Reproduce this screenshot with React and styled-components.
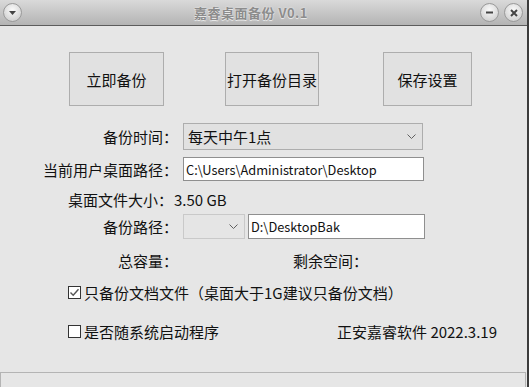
import React from 'react';
import styled, { createGlobalStyle } from 'styled-components';

const GlobalStyle = createGlobalStyle`
  html, body {
    margin: 0;
    padding: 0;
    background: #e6e6e6;
  }
  * { box-sizing: border-box; }
`

const Window = styled.div`
  width: 529px;
  height: 387px;
  display: flex;
  flex-direction: column;
  background: #e6e6e6;
  border-right: 2px solid #3c3c3c;
  font-family: "Noto Sans CJK SC", "Noto Sans", sans-serif;
  font-size: 15px;
  color: #111;
  overflow: hidden;
`

const TitleBar = styled.div`
  height: 26px;
  flex: none;
  display: flex;
  align-items: center;
  padding: 0 4px 0 3px;
  background: linear-gradient(to bottom, #d9d9d9, #b4b4b4);
  border-bottom: 1px solid #5c5c5c;
`

const TitleText = styled.div`
  flex: 1;
  text-align: center;
  font-family: "Noto Sans CJK SC", "DejaVu Sans", sans-serif;
  font-weight: bold;
  font-size: 13px;
  color: #8c8c8c;
  text-shadow: 0 1px 0 #e8e8e8, 0 0 2px #f0f0f0;
  letter-spacing: 0.5px;
`

const RoundButton = styled.div`
  width: 19px;
  height: 19px;
  border-radius: 50%;
  border: 1px solid #9a9a9a;
  background: radial-gradient(circle at 50% 35%, #fafafa, #d4d4d4 75%);
  display: flex;
  align-items: center;
  justify-content: center;
  margin-left: ${p => p.$gap || 0}px;
`

const Body = styled.div`
  flex: 1;
  display: flex;
  flex-direction: column;
`

const Toolbar = styled.div`
  display: flex;
  padding: 26px 0 0 69px;
  margin-bottom: 17px;
`

const ActionButton = styled.button`
  width: ${p => p.$w}px;
  height: 54px;
  margin-right: ${p => p.$gap || 0}px;
  padding: 0;
  background: #e1e1e1;
  border: 1px solid #adadad;
  font-family: inherit;
  font-size: 15px;
  color: #111;
`

const Row = styled.div`
  display: flex;
  align-items: center;
  height: ${p => p.$h}px;
  margin-top: ${p => p.$top || 0}px;
  padding-left: ${p => p.$indent || 0}px;
`

const Label = styled.div`
  width: ${p => p.$w || 178}px;
  flex: none;
  text-align: right;
  white-space: nowrap;
  margin-right: ${p => p.$gap ?? 5}px;
`

const Select = styled.div`
  width: ${p => p.$w}px;
  height: 100%;
  flex: none;
  display: flex;
  align-items: center;
  justify-content: space-between;
  padding: 0 6px 0 4px;
  background: ${p => p.$muted ? '#e5e5e5' : '#e1e1e1'};
  border: 1px solid ${p => p.$muted ? '#c9c9c9' : '#adadad'};
`

const Input = styled.div`
  width: ${p => p.$w}px;
  height: 100%;
  flex: none;
  margin-left: ${p => p.$gap || 0}px;
  display: flex;
  align-items: center;
  padding-left: 2px;
  background: #fff;
  border: 1px solid #8f8f8f;
  font-size: 12.8px;
  white-space: nowrap;
`

const Value = styled.span`
  margin-left: ${p => p.$gap || 0}px;
  white-space: nowrap;
`

const Check = styled.span`
  width: 13px;
  height: 13px;
  flex: none;
  border: 1px solid #333;
  background: #fff;
  display: flex;
  align-items: center;
  justify-content: center;
  margin-right: 3px;
`

const StatusBar = styled.div`
  margin-top: auto;
  height: 15px;
  border: 1px solid #b4b4b4;
  border-bottom: none;
  margin-right: 1px;
`

const Chevron = () => (
  <svg width="9" height="5" viewBox="0 0 9 5">
    <polyline points="0.5,0.5 4.5,4.5 8.5,0.5" fill="none" stroke="#606060" strokeWidth="1" />
  </svg>
)

const CheckBox = ({ checked }) => (
  <Check>
    {checked && (
      <svg width="11" height="11" viewBox="0 0 11 11">
        <polyline points="1.5,5.5 4.2,8.2 9.5,2.2" fill="none" stroke="#555" strokeWidth="1.4" />
      </svg>
    )}
  </Check>
)

export default function App() {
  return (
    <>
      <GlobalStyle />
      <Window>
        <TitleBar>
          <RoundButton>
            <svg width="7" height="4" viewBox="0 0 7 4"><polygon points="0,0 7,0 3.5,4" fill="#444" /></svg>
          </RoundButton>
          <TitleText>嘉睿桌面备份 V0.1</TitleText>
          <RoundButton>
            <svg width="7" height="3" viewBox="0 0 7 3"><rect x="0" y="0.5" width="7" height="2" fill="#444" /></svg>
          </RoundButton>
          <RoundButton $gap={5}>
            <svg width="8" height="8" viewBox="0 0 8 8">
              <path d="M1 1L7 7M7 1L1 7" stroke="#444" strokeWidth="2" />
            </svg>
          </RoundButton>
        </TitleBar>
        <Body>
          <Toolbar>
            <ActionButton $w={95} $gap={61}>立即备份</ActionButton>
            <ActionButton $w={94} $gap={64}>打开备份目录</ActionButton>
            <ActionButton $w={89}>保存设置</ActionButton>
          </Toolbar>

          <Row $h={27}>
            <Label>备份时间：</Label>
            <Select $w={240}>
              <span>每天中午1点</span>
              <Chevron />
            </Select>
          </Row>

          <Row $h={24} $top={7}>
            <Label>当前用户桌面路径：</Label>
            <Input $w={241}>C:\Users\Administrator\Desktop</Input>
          </Row>

          <Row $h={24} $top={6} $indent={68}>
            <span>桌面文件大小：</span>
            <Value $gap={1}>3.50 GB</Value>
          </Row>

          <Row $h={25} $top={3}>
            <Label>备份路径：</Label>
            <Select $w={62} $muted>
              <span />
              <Chevron />
            </Select>
            <Input $w={177} $gap={3}>D:\DesktopBak</Input>
          </Row>

          <Row $h={24} $top={9}>
            <Label $gap={115}>总容量：</Label>
            <span>剩余空间：</span>
          </Row>

          <Row $h={24} $top={8} $indent={68}>
            <CheckBox checked />
            <span>只备份文档文件（桌面大于1G建议只备份文档）</span>
          </Row>

          <Row $h={24} $top={15} $indent={68}>
            <CheckBox />
            <span>是否随系统启动程序</span>
            <Value $gap={118}>正安嘉睿软件 2022.3.19</Value>
          </Row>

          <StatusBar />
        </Body>
      </Window>
    </>
  );
}
